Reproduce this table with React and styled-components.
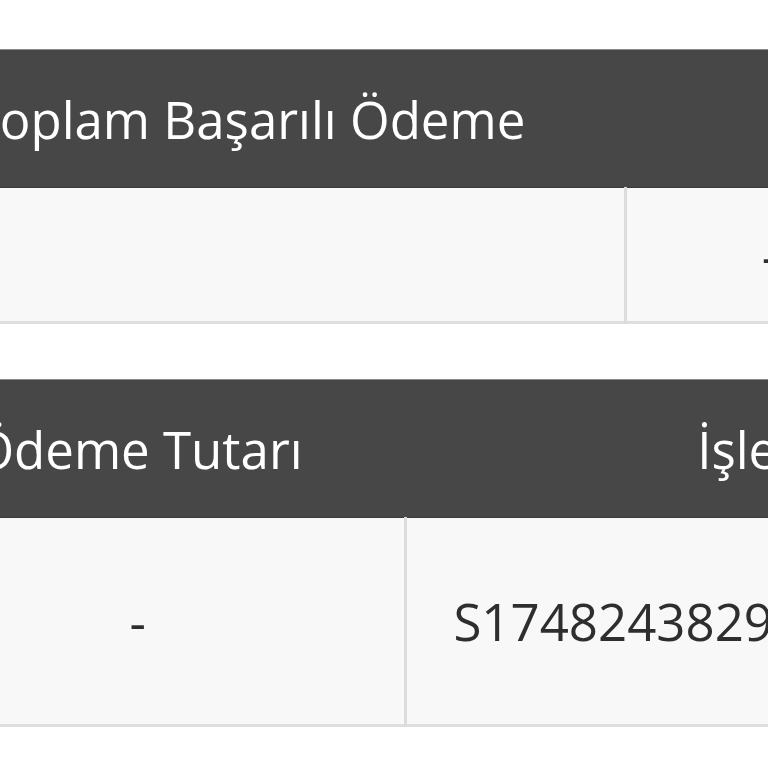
import React from "react";
import styled, { createGlobalStyle } from "styled-components";

const GlobalStyle = createGlobalStyle`
  html, body {
    margin: 0;
    padding: 0;
    background: #ffffff;
    overflow: hidden;
  }
`;

const Page = styled.div`
  width: 768px;
  height: 768px;
  overflow: hidden;
  padding-top: 49px;
  box-sizing: border-box;
  font-family: "Open Sans", "Noto Sans", sans-serif;
`;

const Stack = styled.div`
  display: flex;
  flex-direction: column;
  gap: 55px;
  margin-left: -128px;
`;

const Table = styled.table`
  border-collapse: collapse;
  table-layout: fixed;
  width: ${(p) => p.$width}px;
  border-top: 1px solid #8a8a8a;
  border-bottom: 3px solid #dedede;
`;

const Col = styled.col`
  width: ${(p) => p.$width}px;
`;

const HeadCell = styled.th`
  height: 137px;
  padding: 0;
  background: #474747;
  color: #ffffff;
  font-weight: 400;
  font-size: 51px;
  text-align: center;
  white-space: nowrap;
  border-bottom: 1px solid #3a3a3a;
`;

const BodyCell = styled.td`
  height: ${(p) => p.$height}px;
  padding: 0;
  background: #f8f8f8;
  color: #2e2e2e;
  font-size: 51px;
  text-align: center;
  white-space: nowrap;
  & + & {
    border-left: 3px solid #dcdcdc;
  }
`;

const App = () => {
  return (
    <>
      <GlobalStyle />
      <Page>
        <Stack>
          <Table $width={1443}>
            <colgroup>
              <Col $width={753} />
              <Col $width={290} />
              <Col $width={400} />
            </colgroup>
            <thead>
              <tr>
                <HeadCell>Toplam Başarılı Ödeme</HeadCell>
                <HeadCell colSpan={2}>Toplam Tutar</HeadCell>
              </tr>
            </thead>
            <tbody>
              <tr>
                <BodyCell $height={133}></BodyCell>
                <BodyCell $height={133}>-</BodyCell>
                <BodyCell $height={133}>-</BodyCell>
              </tr>
            </tbody>
          </Table>
          <Table $width={1327}>
            <colgroup>
              <Col $width={533} />
              <Col $width={794} />
            </colgroup>
            <thead>
              <tr>
                <HeadCell>Ödeme Tutarı</HeadCell>
                <HeadCell>İşlem No</HeadCell>
              </tr>
            </thead>
            <tbody>
              <tr>
                <BodyCell $height={206}>-</BodyCell>
                <BodyCell $height={206}>S17482438295371842069135</BodyCell>
              </tr>
            </tbody>
          </Table>
        </Stack>
      </Page>
    </>
  );
};

export default App;
